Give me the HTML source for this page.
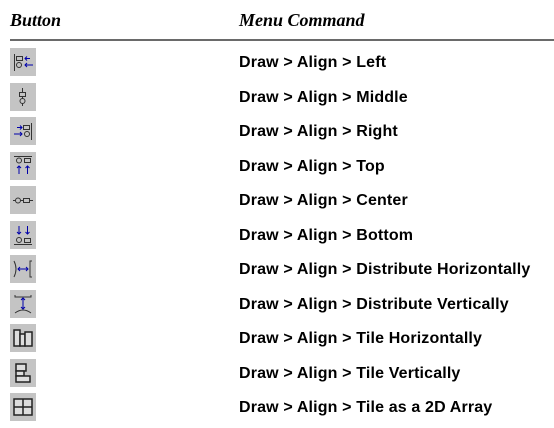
<!DOCTYPE html>
<html><head><style>
body{margin:0;width:554px;height:428px;background:#fff;position:relative;overflow:hidden}
.h{position:absolute;top:10px;font:italic bold 18px "Liberation Serif",serif;color:#000}
.line{position:absolute;left:10px;top:39px;width:544px;height:2px;background:#6a6a6a}
.r{position:absolute;left:0;width:554px;height:30px}
.ic{position:absolute;left:10px;top:0;width:26px;height:28px;background:#c4c4c4}
.ic svg{position:absolute;left:0;top:0}
.t{position:absolute;left:239px;top:6px;font:bold 16px "Liberation Sans",sans-serif;letter-spacing:0.15px;color:#000}
</style></head><body>
<div class="h" style="left:10px">Button</div>
<div class="h" style="left:239px">Menu Command</div>
<div class="line"></div>

<div class="r" style="top:48px"><div class="ic"><svg width="26" height="28" fill="none" stroke-width="1"><path d="M4.5 6v17" stroke="#333"/><rect x="6.5" y="8.5" width="6" height="4" stroke="#333"/><circle cx="9" cy="17" r="2.5" stroke="#333"/><path d="M20 10.5h-5M17 8.5l-2 2 2 2M23 17h-8M17 15l-2 2 2 2" stroke="#00a"/></svg></div><div class="t">Draw &gt; Align &gt; Left</div></div>

<div class="r" style="top:83px"><div class="ic"><svg width="26" height="28" fill="none"><path d="M12.5 5v18" stroke="#333"/><rect x="9.5" y="9.5" width="6" height="4" fill="#c4c4c4" stroke="#333"/><circle cx="12.5" cy="18" r="2.5" fill="#c4c4c4" stroke="#333"/></svg></div><div class="t">Draw &gt; Align &gt; Middle</div></div>

<div class="r" style="top:117px"><div class="ic"><svg width="26" height="28" fill="none"><path d="M21.5 6v17" stroke="#333"/><rect x="13.5" y="8.5" width="6" height="4" stroke="#333"/><circle cx="17" cy="17" r="2.5" stroke="#333"/><path d="M7 10.5h5M10 8.5l2 2-2 2M4 17h8M10 15l2 2-2 2" stroke="#00a"/></svg></div><div class="t">Draw &gt; Align &gt; Right</div></div>

<div class="r" style="top:152px"><div class="ic"><svg width="26" height="28" fill="none"><path d="M4 4.5h18" stroke="#333"/><circle cx="9" cy="8.5" r="2.5" stroke="#333"/><rect x="14.5" y="6.5" width="6" height="4" stroke="#333"/><path d="M9 14v8M7 16l2-2 2 2M17.5 14v8M15.5 16l2-2 2 2" stroke="#00a"/></svg></div><div class="t">Draw &gt; Align &gt; Top</div></div>

<div class="r" style="top:186px"><div class="ic"><svg width="26" height="28" fill="none"><path d="M3 14.5h20" stroke="#333"/><circle cx="8" cy="14.5" r="2.5" fill="#c4c4c4" stroke="#333"/><rect x="13.5" y="12.5" width="6" height="4" fill="#c4c4c4" stroke="#333"/></svg></div><div class="t">Draw &gt; Align &gt; Center</div></div>

<div class="r" style="top:221px"><div class="ic"><svg width="26" height="28" fill="none"><path d="M4 23.5h18" stroke="#333"/><circle cx="9" cy="19" r="2.5" stroke="#333"/><rect x="14.5" y="17.5" width="6" height="4" stroke="#333"/><path d="M9 5v8M7 11l2 2 2-2M17.5 5v8M15.5 11l2 2 2-2" stroke="#00a"/></svg></div><div class="t">Draw &gt; Align &gt; Bottom</div></div>

<div class="r" style="top:255px"><div class="ic"><svg width="26" height="28" fill="none"><path d="M4 6q4 8 0 16M22 6h-2v16h2" stroke="#333"/><path d="M8 14h10M10 12l-2 2 2 2M16 12l2 2-2 2" stroke="#00a"/></svg></div><div class="t">Draw &gt; Align &gt; Distribute Horizontally</div></div>

<div class="r" style="top:290px"><div class="ic"><svg width="26" height="28" fill="none"><path d="M5 5v2h16V5M5 23q8-6 16 0" stroke="#333"/><path d="M13 8v11M11 10l2-2 2 2M11 17l2 2 2-2" stroke="#00a"/></svg></div><div class="t">Draw &gt; Align &gt; Distribute Vertically</div></div>

<div class="r" style="top:324px"><div class="ic"><svg width="26" height="28" fill="none" stroke="#222" stroke-width="1.5"><rect x="4" y="6" width="6" height="16" fill="#ddd"/><rect x="10" y="10" width="5" height="12" fill="#ddd"/><rect x="15" y="8" width="7" height="14" fill="#ddd"/></svg></div><div class="t">Draw &gt; Align &gt; Tile Horizontally</div></div>

<div class="r" style="top:359px"><div class="ic"><svg width="26" height="28" fill="none" stroke="#222" stroke-width="1.5"><rect x="6" y="5" width="10" height="7" fill="#ddd"/><rect x="6" y="12" width="8" height="5" fill="#ddd"/><rect x="6" y="17" width="14" height="6" fill="#ddd"/></svg></div><div class="t">Draw &gt; Align &gt; Tile Vertically</div></div>

<div class="r" style="top:393px"><div class="ic"><svg width="26" height="28" fill="#ddd" stroke="#222" stroke-width="1.5"><rect x="4" y="6" width="18" height="16"/><path d="M13 6v16M4 14h18"/></svg></div><div class="t">Draw &gt; Align &gt; Tile as a 2D Array</div></div>
</body></html>
